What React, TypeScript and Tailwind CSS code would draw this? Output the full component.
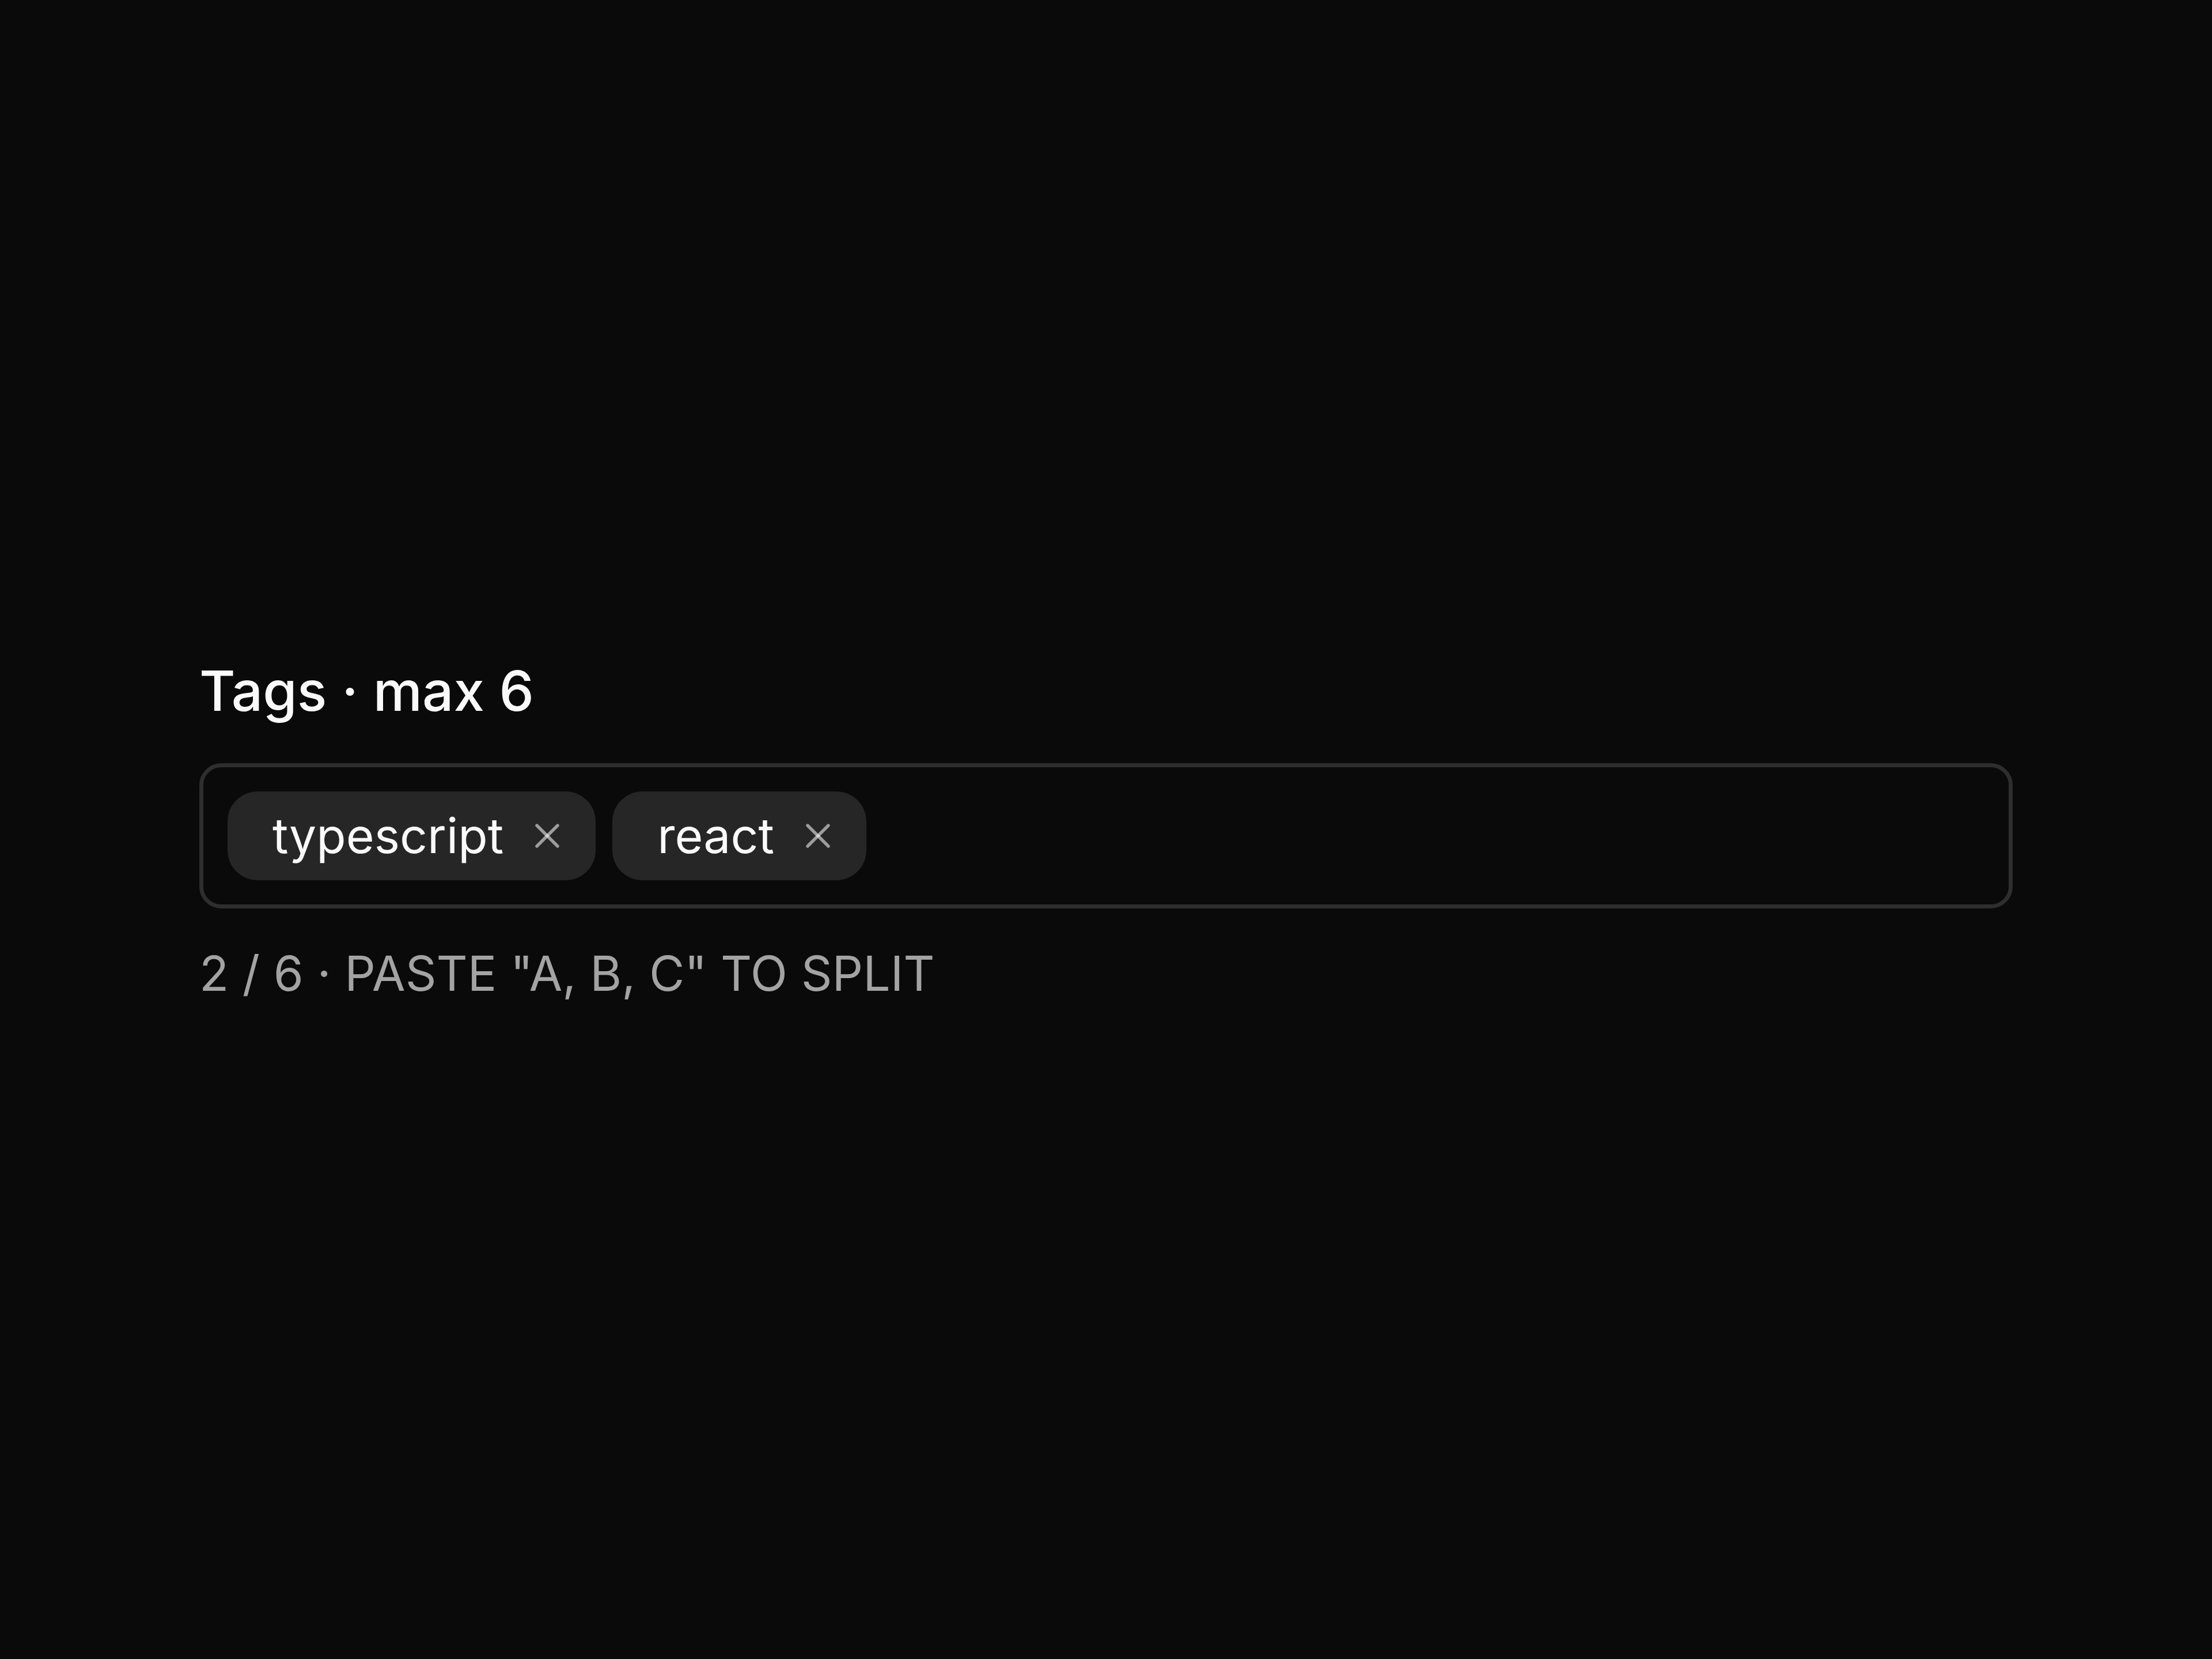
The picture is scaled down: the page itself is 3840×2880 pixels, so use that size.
import React from "react";

function XIcon() {
  return (
    <svg width="72" height="72" viewBox="0 0 24 24" fill="none" stroke="white" strokeOpacity={0.55} strokeWidth={1.8} strokeLinecap="round" strokeLinejoin="round">
      <path d="M18 6 6 18" />
      <path d="m6 6 12 12" />
    </svg>
  );
}

function Chip({ label }: { label: string }) {
  return (
    <div className="flex h-[154px] items-center rounded-[52px] bg-[#262626] pl-[78px] pr-[48px]">
      <span className="text-[84px] leading-none text-[#fafafa]">{label}</span>
      <button className="ml-[40px] flex h-[72px] w-[72px] items-center justify-center">
        <XIcon />
      </button>
    </div>
  );
}

export default function App() {
  return (
    <div
      className="flex min-h-screen w-full flex-col justify-center bg-[#0a0a0a] px-[346px]"
      style={{ fontFamily: "Inter, 'Noto Sans', sans-serif" }}
    >
      <div className="text-[96px] font-medium leading-[144px] text-[#fafafa]">Tags · max 6</div>
      <div className="mt-[54px] flex flex-wrap items-center gap-[29px] rounded-[38px] border-[7px] border-[#2e2e2e] p-[42px]">
        <Chip label="typescript" />
        <Chip label="react" />
      </div>
      <div className="mt-[50px] text-[84px] uppercase leading-[126px] text-[#a3a3a3]">
        2 / 6 · Paste "a, b, c" to split
      </div>
    </div>
  );
}
